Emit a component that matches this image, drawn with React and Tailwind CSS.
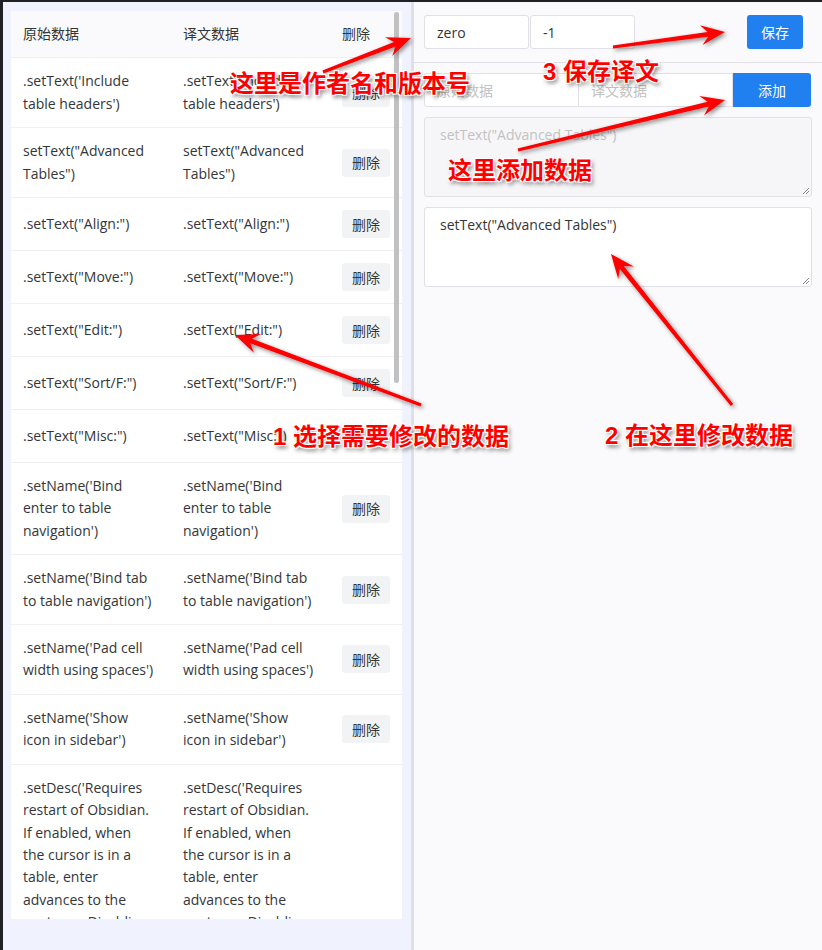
import React from 'react';

const rows = [
  { lines: [".setText('Include", "table headers')"] },
  { lines: ['setText("Advanced', 'Tables")'] },
  { lines: ['.setText("Align:")'] },
  { lines: ['.setText("Move:")'] },
  { lines: ['.setText("Edit:")'] },
  { lines: ['.setText("Sort/F:")'] },
  { lines: ['.setText("Misc:")'], noBtn: true },
  { lines: [".setName('Bind", 'enter to table', "navigation')"] },
  { lines: [".setName('Bind tab", "to table navigation')"] },
  { lines: [".setName('Pad cell", "width using spaces')"] },
  { lines: [".setName('Show", "icon in sidebar')"] },
  {
    lines: [
      ".setDesc('Requires",
      'restart of Obsidian.',
      'If enabled, when',
      'the cursor is in a',
      'table, enter',
      'advances to the',
      'next row. Disabling',
      'this can help avoid',
      'conflicting with tag',
      'or CJK',
      'autocompletion. If',
      'disabling, bind "Go',
      'to next row" in the',
      'Obsidian Hotkeys',
      "settings.')",
    ],
  },
];

// 箭头: 尾部细, 头部三角
function arrowPoints(x1, y1, x2, y2) {
  const dx = x2 - x1;
  const dy = y2 - y1;
  const len = Math.hypot(dx, dy);
  const ux = dx / len;
  const uy = dy / len;
  const nx = -uy;
  const ny = ux;
  const H = 24;
  const W = 10;
  const w = 2.4;
  const t = 1.6;
  const p = (x, y) => `${x.toFixed(1)},${y.toFixed(1)}`;
  const kx = x2 - ux * H * 0.72;
  const ky = y2 - uy * H * 0.72;
  const bx = x2 - ux * H;
  const by = y2 - uy * H;
  return [
    p(x1 + nx * t, y1 + ny * t),
    p(kx + nx * w, ky + ny * w),
    p(bx + nx * W, by + ny * W),
    p(x2, y2),
    p(bx - nx * W, by - ny * W),
    p(kx - nx * w, ky - ny * w),
    p(x1 - nx * t, y1 - ny * t),
  ].join(' ');
}

const arrows = [
  [323, 72, 411, 38],
  [613, 47, 725, 32],
  [518, 150, 725, 100],
  [421, 405, 235, 335],
  [732, 405, 611, 254],
];

const Note = ({ className, children }) => (
  <div
    className={`absolute whitespace-nowrap text-[24px] leading-[24px] font-bold text-[#ff0000] font-['Liberation_Sans','Noto_Sans_CJK_SC',sans-serif] [text-shadow:-1px_-1px_0_#fff,1px_-1px_0_#fff,-1px_1px_0_#fff,1px_1px_0_#fff,0_0_3px_#fff,2px_3px_4px_rgba(0,0,0,0.55)] ${className}`}
  >
    {children}
  </div>
);

const Cell = ({ lines }) => (
  <div className="px-3 py-3 leading-[22.4px] whitespace-nowrap">
    {lines.map((l, i) => (
      <div key={i}>{l}</div>
    ))}
  </div>
);

export default function App() {
  return (
    <div className="relative flex h-[950px] w-[822px] overflow-hidden border-t-2 border-l-[3px] border-[#202124] bg-[#fafafc] text-[14px] text-[#333639] font-['Open_Sans','Noto_Sans_CJK_SC',sans-serif]">
      {/* 左侧: 数据表 */}
      <div className="w-[408px] shrink-0 bg-[#f0f3fd] pl-[8px] pt-[9px]">
        <div className="relative h-[908px] w-[391px] overflow-hidden bg-white">
          <div className="grid grid-cols-[160px_159px_72px] border-b border-[#efeff5] bg-[#fafafc]">
            <div className="px-3 py-3 leading-[22.4px]">原始数据</div>
            <div className="px-3 py-3 leading-[22.4px]">译文数据</div>
            <div className="px-3 py-3 leading-[22.4px]">删除</div>
          </div>
          {rows.map((row, i) => (
            <div key={i} className="grid grid-cols-[160px_159px_72px] items-center border-b border-[#efeff5]">
              <Cell lines={row.lines} />
              <Cell lines={row.lines} />
              <div className="px-3 py-3">
                {row.noBtn ? (
                  <div className="h-[28px]" />
                ) : (
                  <button className="block h-[28px] w-[48px] rounded-[3px] bg-[#f2f3f4] text-[14px] text-[#333639]">删除</button>
                )}
              </div>
            </div>
          ))}
          <div className="absolute right-[3px] top-[1px] h-[371px] w-[5px] rounded-full bg-[#c1c1c1]" />
        </div>
      </div>

      {/* 分割线 */}
      <div className="w-[3px] shrink-0 bg-[#dfdfe8]" />

      {/* 右侧: 编辑 */}
      <div className="flex-1 bg-[#fafafc]">
        <div className="flex items-center border-b border-[#e0e0e6] pl-[10px] pr-[19px] pt-[13px] pb-[13px]">
          <div className="flex gap-px">
            <div className="flex h-[34px] w-[105px] items-center rounded-[3px] border border-[#e0e0e6] bg-white px-3">zero</div>
            <div className="flex h-[34px] w-[105px] items-center rounded-[3px] border border-[#e0e0e6] bg-white px-3">-1</div>
          </div>
          <button className="ml-auto h-[34px] w-[56px] rounded-[3px] bg-[#2080f0] text-white">保存</button>
        </div>

        <div className="flex flex-col gap-[10px] px-[10px] pt-[10px]">
          <div className="flex h-[34px]">
            <div className="flex w-[155px] items-center rounded-l-[3px] border border-[#e0e0e6] bg-white px-3 text-[#c2c2c2]">原始数据</div>
            <div className="flex w-[154px] items-center border-y border-r border-[#e0e0e6] bg-white px-3 text-[#c2c2c2]">译文数据</div>
            <button className="w-[78px] rounded-r-[3px] bg-[#2080f0] text-white">添加</button>
          </div>
          <div className="relative h-[80px] rounded-[3px] border border-[#e0e0e6] bg-[#f6f6f9] px-[15px] pt-[6px] leading-[22.4px] text-[#c2c2c2]">
            setText("Advanced Tables")
            <svg className="absolute bottom-[1px] right-[1px]" width="8" height="8" viewBox="0 0 8 8">
              <path d="M7 1 L1 7 M7 4 L4 7" stroke="#888" strokeWidth="1" />
            </svg>
          </div>
          <div className="relative h-[80px] rounded-[3px] border border-[#e0e0e6] bg-white px-[15px] pt-[6px] leading-[22.4px]">
            setText("Advanced Tables")
            <svg className="absolute bottom-[1px] right-[1px]" width="8" height="8" viewBox="0 0 8 8">
              <path d="M7 1 L1 7 M7 4 L4 7" stroke="#888" strokeWidth="1" />
            </svg>
          </div>
        </div>
      </div>

      {/* 标注箭头 */}
      <svg className="pointer-events-none absolute left-[-3px] top-[-2px]" width="822" height="950">
        <defs>
          <filter id="shadow" x="-20%" y="-20%" width="140%" height="140%">
            <feDropShadow dx="2" dy="2" stdDeviation="2" floodColor="#000" floodOpacity="0.45" />
          </filter>
        </defs>
        {arrows.map((a, i) => (
          <polygon key={i} points={arrowPoints(...a)} fill="#ff0000" filter="url(#shadow)" />
        ))}
      </svg>

      {/* 标注文字 */}
      <Note className="left-[227px] top-[70px]">这里是作者名和版本号</Note>
      <Note className="left-[540px] top-[58px]">3 保存译文</Note>
      <Note className="left-[445px] top-[157px]">这里添加数据</Note>
      <Note className="left-[270px] top-[423px]">1 选择需要修改的数据</Note>
      <Note className="left-[602px] top-[422px]">2 在这里修改数据</Note>
    </div>
  );
}
